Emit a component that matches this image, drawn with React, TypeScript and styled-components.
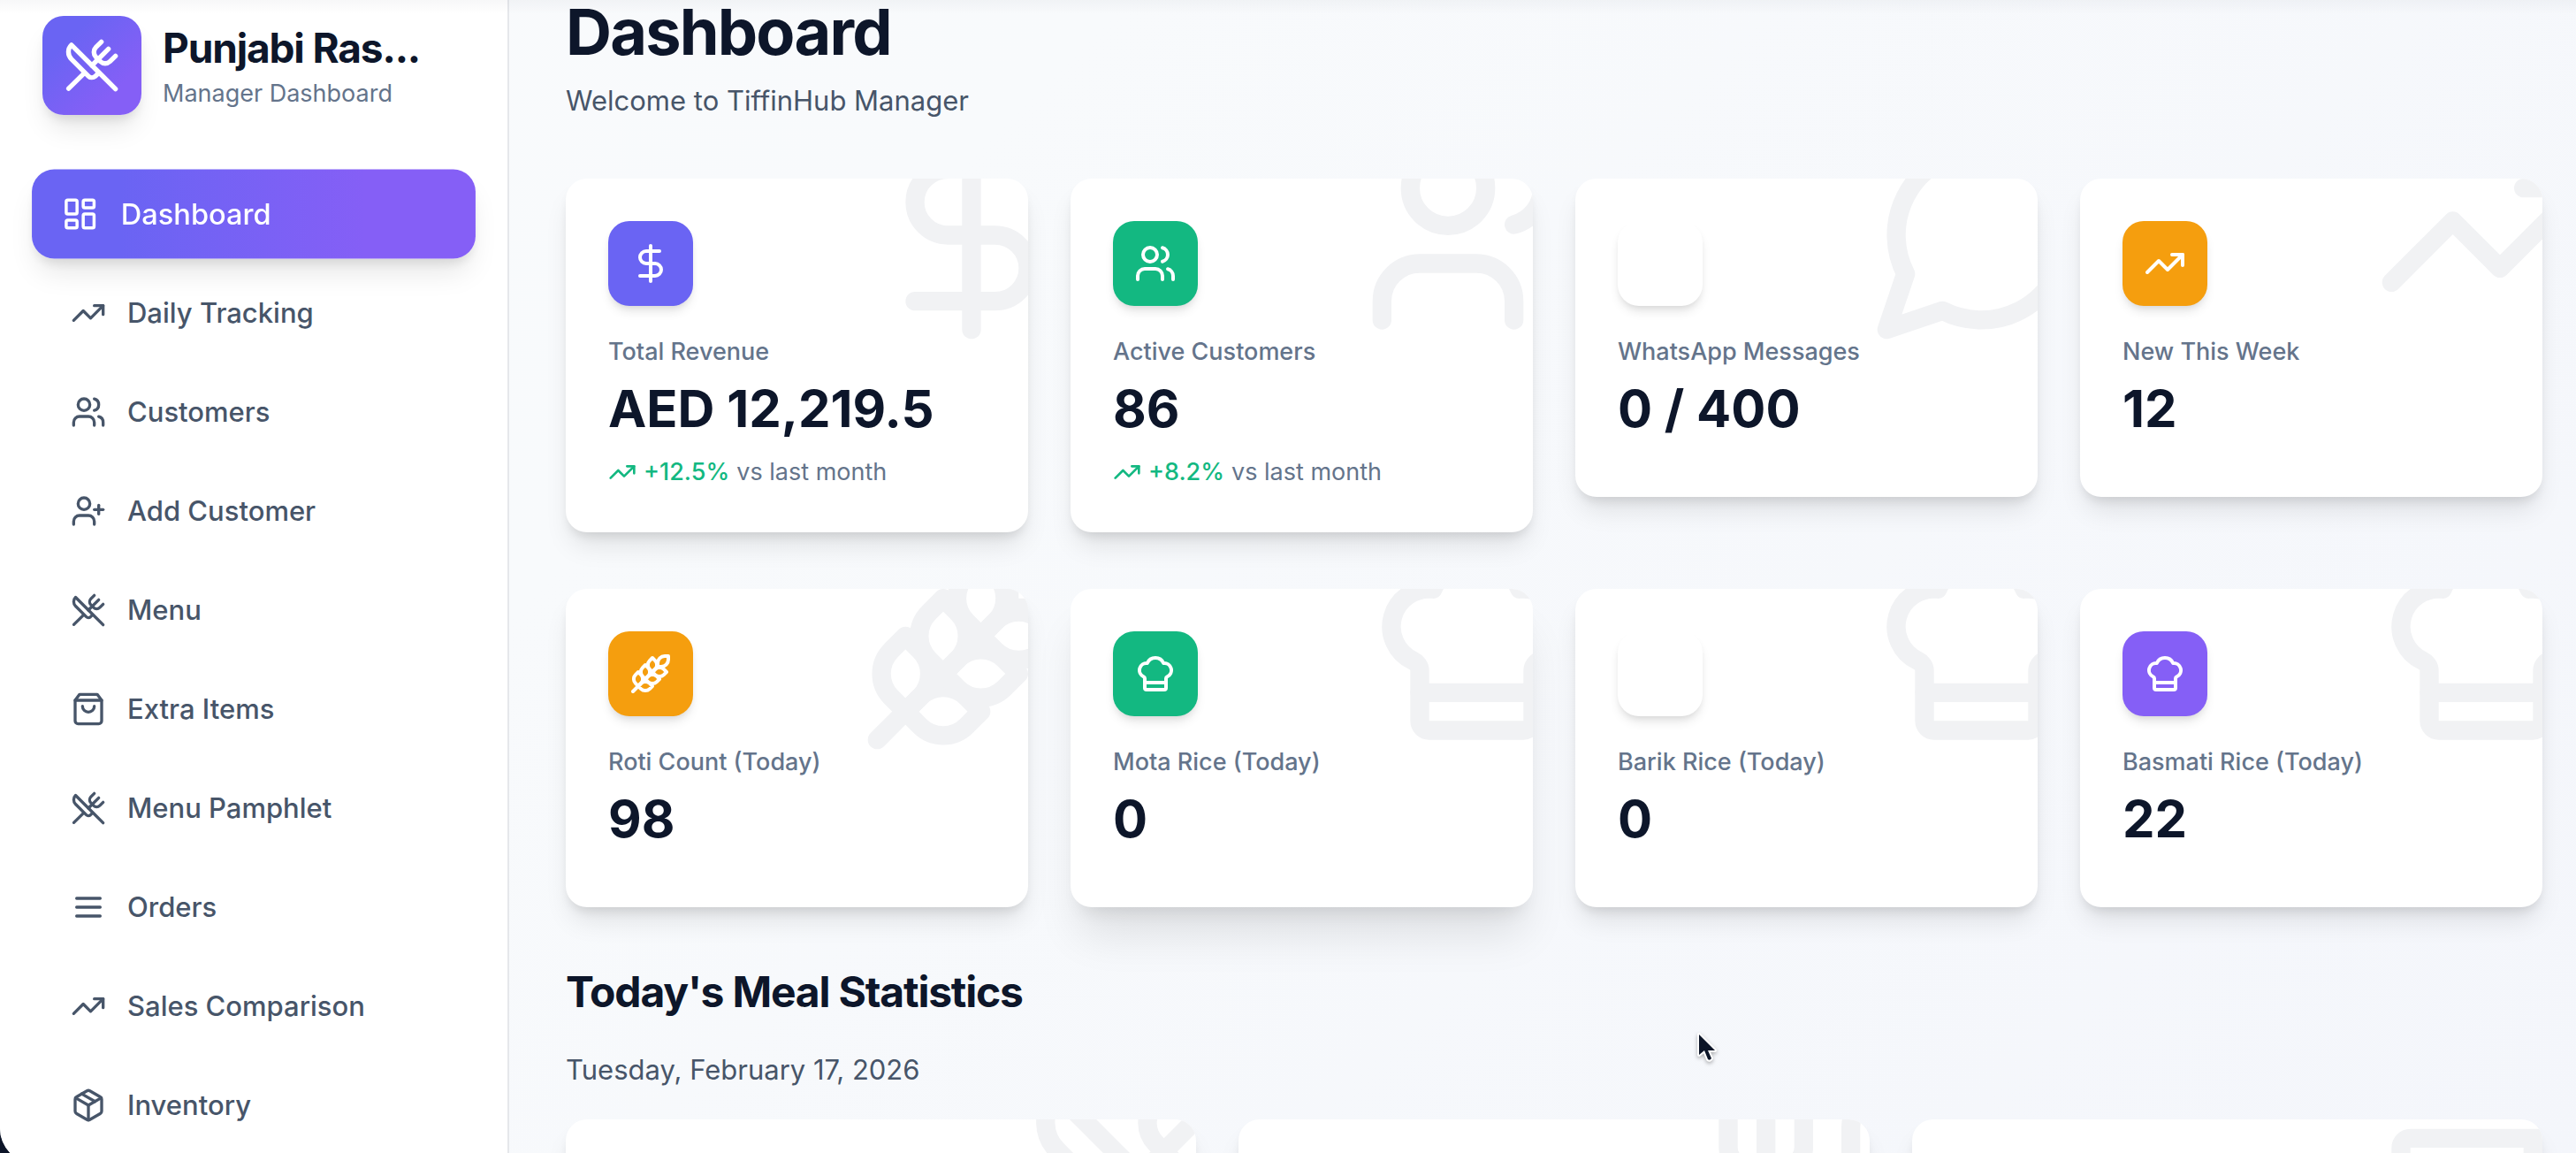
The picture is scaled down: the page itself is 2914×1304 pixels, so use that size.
import React from "react";
import styled, { createGlobalStyle, css } from "styled-components";
import {
  ChefHat,
  Coffee,
  DollarSign,
  LayoutDashboard,
  Package,
  TrendingUp,
  UserPlus,
  Users,
  Utensils,
  UtensilsCrossed,
  Wheat,
} from "lucide-react";

const GlobalStyle = createGlobalStyle`
  *, *::before, *::after { box-sizing: border-box; }
  html, body, #root { height: 100%; }
  body {
    margin: 0;
    overflow: hidden;
    background: #0c1528;
    color: #0d162a;
    font-family: Inter, "Liberation Sans", sans-serif;
    font-size: 31px;
    line-height: 48px;
  }
  h1, h2, p, ul { margin: 0; padding: 0; }
`;

const indigo = "#6a64f3";
const violet = "#855ff6";
const green = "#13b881";
const amber = "#f59e0e";
const shadowMd = "0 8px 12px -2px rgba(0, 0, 0, 0.1), 0 4px 8px -4px rgba(0, 0, 0, 0.1)";
const shadowLg = "0 20px 30px -6px rgba(0, 0, 0, 0.1), 0 8px 12px -4px rgba(0, 0, 0, 0.1)";
const shadowXl = "0 40px 50px -10px rgba(0, 0, 0, 0.1), 0 16px 20px -12px rgba(0, 0, 0, 0.1)";

type IconProps = { size?: number };
type IconType = React.ComponentType<IconProps>;

const Stroked = ({ size = 24, children }: React.PropsWithChildren<IconProps>) => (
  <svg
    width={size}
    height={size}
    viewBox="0 0 24 24"
    fill="none"
    stroke="currentColor"
    strokeWidth={2}
    strokeLinecap="round"
    strokeLinejoin="round"
    aria-hidden="true"
  >
    {children}
  </svg>
);

const MenuLines = ({ size }: IconProps) => (
  <Stroked size={size}>
    <path d="M4 6h16M4 12h16M4 18h16" />
  </Stroked>
);

const Bag = ({ size }: IconProps) => (
  <Stroked size={size}>
    <path d="M6 2 3 6v14a2 2 0 0 0 2 2h14a2 2 0 0 0 2-2V6l-3-4Z" />
    <path d="M3 6h18" />
    <path d="M16 10a4 4 0 0 1-8 0" />
  </Stroked>
);

const Bubble = ({ size }: IconProps) => (
  <Stroked size={size}>
    <path d="M7.9 20A9 9 0 1 0 4 16.1L2 22Z" />
  </Stroked>
);

const Shell = styled.div`
  display: flex;
  height: calc(100vh + 12px);
  overflow: hidden;
  position: relative;
  border-bottom-left-radius: 40px;
  background: linear-gradient(135deg, #f9fafc 0%, #f8fafc 30%, #f4f6fb 100%);
`;

const TopShade = styled.div`
  position: absolute;
  inset: 0 0 auto 0;
  height: 16px;
  background: linear-gradient(rgba(15, 23, 42, 0.03), rgba(15, 23, 42, 0));
  pointer-events: none;
`;

const Sidebar = styled.aside`
  flex: 0 0 576px;
  padding: 18px 48px 0;
  background: #fff;
  border-right: 2px solid #e5e7eb;
`;

const Brand = styled.div`
  display: flex;
  align-items: center;
  gap: 24px;
`;

const BrandMark = styled.div`
  display: grid;
  place-items: center;
  flex: none;
  width: 112px;
  height: 112px;
  border-radius: 24px;
  color: #fff;
  background: linear-gradient(135deg, ${indigo} 25%, ${violet} 75%);
  box-shadow: ${shadowLg};
`;

const BrandName = styled.div`
  font-size: 46px;
  line-height: 64px;
  font-weight: 700;
  letter-spacing: -0.025em;
  white-space: nowrap;
`;

const BrandRole = styled.div`
  font-size: 27px;
  line-height: 40px;
  color: #64748b;
`;

const NavList = styled.ul`
  display: flex;
  flex-direction: column;
  gap: 16px;
  margin-top: 64px;
  list-style: none;
`;

const NavLink = styled.a<{ $active?: boolean }>`
  display: flex;
  align-items: center;
  gap: 24px;
  height: 96px;
  padding: 0 32px;
  border-radius: 24px;
  color: #475569;
  font-weight: 500;
  text-decoration: none;
  ${(p) =>
    p.$active &&
    css`
      color: #fff;
      background: linear-gradient(90deg, ${indigo} 20%, ${violet} 75%);
      box-shadow: ${shadowLg};
      transform: scale(1.05);
    `}
`;

const Main = styled.main`
  flex: 1;
  min-width: 0;
  padding: 0 38px 0 64px;
`;

const PageTitle = styled.h1`
  font-size: 72px;
  line-height: 72px;
  font-weight: 700;
  letter-spacing: -0.025em;
`;

const Lead = styled.p<{ $gap: number }>`
  margin-top: ${(p) => p.$gap}px;
  color: #475569;
`;

const SectionTitle = styled.h2`
  margin-top: 64px;
  font-size: 48px;
  line-height: 64px;
  font-weight: 700;
  letter-spacing: -0.025em;
`;

const Grid = styled.div<{ $cols: number; $gap: number }>`
  display: grid;
  grid-template-columns: repeat(${(p) => p.$cols}, minmax(0, 1fr));
  column-gap: 48px;
  align-items: start;
  margin-top: ${(p) => p.$gap}px;
`;

const Card = styled.article<{ $raised?: boolean }>`
  position: relative;
  overflow: hidden;
  padding: 48px;
  border-radius: 24px;
  background: #fff;
  box-shadow: ${(p) => (p.$raised ? shadowXl : shadowLg)};
`;

const MealCard = styled(Card)`
  min-height: 360px;
`;

const Watermark = styled.div`
  position: absolute;
  top: -64px;
  right: -64px;
  color: #f1f2f4;
  svg { display: block; }
`;

const Tile = styled.div<{ $tone: string }>`
  display: grid;
  place-items: center;
  width: 96px;
  height: 96px;
  margin-bottom: 32px;
  border-radius: 24px;
  color: #fff;
  background: ${(p) => p.$tone};
  box-shadow: ${shadowMd};
`;

const Label = styled.p`
  font-size: 27px;
  line-height: 40px;
  font-weight: 500;
  color: #64748b;
`;

const Value = styled.p`
  margin: 8px 0 16px;
  font-size: 58px;
  line-height: 72px;
  font-weight: 700;
`;

const Trend = styled.p`
  display: flex;
  align-items: center;
  gap: 8px;
  font-size: 27px;
  line-height: 40px;
  color: #64748b;
`;

const Up = styled.span`
  display: flex;
  align-items: center;
  gap: 8px;
  font-weight: 500;
  color: ${green};
`;

const Pointer = styled.svg`
  position: absolute;
  left: 1914px;
  top: 1160px;
  filter: drop-shadow(0 2px 2px rgba(0, 0, 0, 0.3));
`;

const nav: { label: string; icon: IconType; active?: boolean }[] = [
  { label: "Dashboard", icon: LayoutDashboard, active: true },
  { label: "Daily Tracking", icon: TrendingUp },
  { label: "Customers", icon: Users },
  { label: "Add Customer", icon: UserPlus },
  { label: "Menu", icon: UtensilsCrossed },
  { label: "Extra Items", icon: Bag },
  { label: "Menu Pamphlet", icon: UtensilsCrossed },
  { label: "Orders", icon: MenuLines },
  { label: "Sales Comparison", icon: TrendingUp },
  { label: "Inventory", icon: Package },
];

type Stat = {
  label: string;
  value: string;
  icon: IconType;
  tone: string;
  trend?: string;
  raised?: boolean;
};

const business: Stat[] = [
  { label: "Total Revenue", value: "AED 12,219.5", icon: DollarSign, tone: indigo, trend: "+12.5%" },
  { label: "Active Customers", value: "86", icon: Users, tone: green, trend: "+8.2%" },
  { label: "WhatsApp Messages", value: "0 / 400", icon: Bubble, tone: "#fff" },
  { label: "New This Week", value: "12", icon: TrendingUp, tone: amber },
];

const kitchen: Stat[] = [
  { label: "Roti Count (Today)", value: "98", icon: Wheat, tone: amber },
  { label: "Mota Rice (Today)", value: "0", icon: ChefHat, tone: green, raised: true },
  { label: "Barik Rice (Today)", value: "0", icon: ChefHat, tone: "#fff" },
  { label: "Basmati Rice (Today)", value: "22", icon: ChefHat, tone: violet },
];

const meals: IconType[] = [UtensilsCrossed, Utensils, Coffee];

const StatCard = ({ label, value, icon: Icon, tone, trend, raised }: Stat) => (
  <Card $raised={raised}>
    <Watermark>
      <Icon size={256} />
    </Watermark>
    <Tile $tone={tone}>
      <Icon size={48} />
    </Tile>
    <Label>{label}</Label>
    <Value>{value}</Value>
    {trend && (
      <Trend>
        <Up>
          <TrendingUp size={32} />
          {trend}
        </Up>
        vs last month
      </Trend>
    )}
  </Card>
);

export default function App() {
  return (
    <>
      <GlobalStyle />
      <Shell>
        <Sidebar>
          <Brand>
            <BrandMark>
              <UtensilsCrossed size={64} />
            </BrandMark>
            <div>
              <BrandName>Punjabi Ras...</BrandName>
              <BrandRole>Manager Dashboard</BrandRole>
            </div>
          </Brand>
          <nav>
            <NavList>
              {nav.map(({ label, icon: Icon, active }) => (
                <li key={label}>
                  <NavLink href="#" $active={active} aria-current={active ? "page" : undefined}>
                    <Icon size={40} />
                    {label}
                  </NavLink>
                </li>
              ))}
            </NavList>
          </nav>
        </Sidebar>
        <Main>
          <PageTitle>Dashboard</PageTitle>
          <Lead $gap={18}>Welcome to TiffinHub Manager</Lead>
          <Grid $cols={4} $gap={64}>
            {business.map((s) => (
              <StatCard key={s.label} {...s} />
            ))}
          </Grid>
          <Grid $cols={4} $gap={64}>
            {kitchen.map((s) => (
              <StatCard key={s.label} {...s} />
            ))}
          </Grid>
          <SectionTitle>Today's Meal Statistics</SectionTitle>
          <Lead $gap={32}>Tuesday, February 17, 2026</Lead>
          <Grid $cols={3} $gap={32}>
            {meals.map((Icon, i) => (
              <MealCard key={i}>
                <Watermark>
                  <Icon size={256} />
                </Watermark>
              </MealCard>
            ))}
          </Grid>
        </Main>
        <TopShade />
        <Pointer width="34" height="48" viewBox="0 0 34 48" aria-hidden="true">
          <path
            d="M8 10v23l6-5 4 10q2 2 4-1l-4-9h8Z"
            fill="#0c1528"
            stroke="#fff"
            strokeWidth="4"
            strokeLinejoin="round"
            paintOrder="stroke"
          />
        </Pointer>
      </Shell>
    </>
  );
}
